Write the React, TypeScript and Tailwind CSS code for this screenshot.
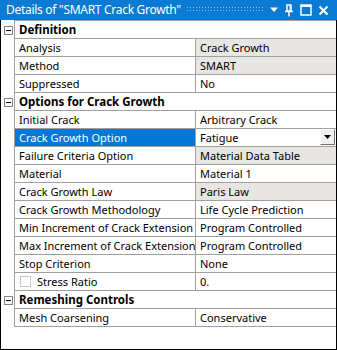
import React from "react";

type Row =
  | { kind: "header"; label: string }
  | {
      kind: "prop";
      name: string;
      value: string;
      grey?: boolean;
      selected?: boolean;
      dropdown?: boolean;
      checkbox?: boolean;
    };

const rows: Row[] = [
  { kind: "header", label: "Definition" },
  { kind: "prop", name: "Analysis", value: "Crack Growth", grey: true },
  { kind: "prop", name: "Method", value: "SMART", grey: true },
  { kind: "prop", name: "Suppressed", value: "No" },
  { kind: "header", label: "Options for Crack Growth" },
  { kind: "prop", name: "Initial Crack", value: "Arbitrary Crack" },
  { kind: "prop", name: "Crack Growth Option", value: "Fatigue", selected: true, dropdown: true },
  { kind: "prop", name: "Failure Criteria Option", value: "Material Data Table", grey: true },
  { kind: "prop", name: "Material", value: "Material 1" },
  { kind: "prop", name: "Crack Growth Law", value: "Paris Law", grey: true },
  { kind: "prop", name: "Crack Growth Methodology", value: "Life Cycle Prediction" },
  { kind: "prop", name: "Min Increment of Crack Extension", value: "Program Controlled" },
  { kind: "prop", name: "Max Increment of Crack Extension", value: "Program Controlled" },
  { kind: "prop", name: "Stop Criterion", value: "None" },
  { kind: "prop", name: "Stress Ratio", value: "0.", checkbox: true },
  { kind: "header", label: "Remeshing Controls" },
  { kind: "prop", name: "Mesh Coarsening", value: "Conservative" },
];

function Collapse() {
  return (
    <div className="w-[9px] h-[9px] border border-[#848484] bg-white flex items-center justify-center">
      <div className="w-[5px] h-px bg-black" />
    </div>
  );
}

export default function App() {
  return (
    <div
      className="w-[337px] h-[350px] bg-white flex flex-col text-[11px] text-black overflow-hidden"
      style={{ fontFamily: '"Noto Sans", "Open Sans", sans-serif' }}
    >
      {/* title bar */}
      <div className="h-[20px] bg-[#0a7ad2] flex items-center pl-[6px] pr-[8px] text-white shrink-0">
        <span className="text-[12px] leading-none whitespace-nowrap tracking-[-0.3px]">
          Details of "SMART Crack Growth"
        </span>
        <svg className="ml-[6px] flex-1 h-[6px]" preserveAspectRatio="none">
          <defs>
            <pattern id="dots" width="3" height="3" patternUnits="userSpaceOnUse">
              <rect x="0" y="0" width="1" height="1" fill="#8fc3ef" />
            </pattern>
          </defs>
          <rect x="0" y="0" width="100%" height="6" fill="url(#dots)" />
        </svg>
        <svg width="10" height="6" viewBox="0 0 10 6" className="ml-[4px]">
          <path d="M1 0.5 H9 L5 5 Z" fill="white" />
        </svg>
        <svg width="10" height="13" viewBox="0 0 10 13" className="ml-[5px]">
          <path d="M3 1 H7 V7 H3 Z" fill="none" stroke="white" strokeWidth="1.5" />
          <path d="M1 7.5 H9" stroke="white" strokeWidth="1.5" />
          <path d="M5 8 V12.5" stroke="white" strokeWidth="1.5" />
          <path d="M6 1.5 V7" stroke="white" strokeWidth="1" />
        </svg>
        <svg width="12" height="12" viewBox="0 0 12 12" className="ml-[6px]">
          <rect x="1" y="1" width="10" height="10" fill="none" stroke="white" strokeWidth="1.5" />
          <path d="M1 2 H11" stroke="white" strokeWidth="2" />
        </svg>
        <svg width="11" height="11" viewBox="0 0 11 11" className="ml-[6px]">
          <path d="M1.5 1.5 L9.5 9.5 M9.5 1.5 L1.5 9.5" stroke="white" strokeWidth="2" />
        </svg>
      </div>

      {/* body */}
      <div className="flex-1 border-l border-r border-b border-black flex flex-col">
        <div className="h-px bg-[#a0a0a0] ml-[13px] mr-0" />
        {rows.map((r, i) =>
          r.kind === "header" ? (
            <div key={i} className="flex h-[18px]">
              <div className="w-[13px] flex items-center justify-center pl-[1px]">
                <Collapse />
              </div>
              <div className="flex-1 border-l border-b border-[#a0a0a0] flex items-center pl-[4px] font-bold leading-none text-[11.5px]">
                {r.label}
              </div>
            </div>
          ) : (
            <div key={i} className="flex h-[18px]">
              <div className="w-[13px]" />
              <div
                className={
                  "w-[182px] border-l border-b border-r border-[#a0a0a0] flex items-center pl-[4px] leading-none whitespace-nowrap " +
                  (r.selected ? "bg-[#0078d7] text-white" : "")
                }
              >
                {r.checkbox && (
                  <div className="w-[11px] h-[11px] border border-[#c8c8c8] bg-white mr-[6px] ml-[1px]" />
                )}
                {r.name}
              </div>
              <div
                className={
                  "flex-1 border-b border-[#a0a0a0] flex items-center pl-[4px] leading-none whitespace-nowrap relative " +
                  (r.grey ? "bg-[#e8e6e3]" : "bg-white")
                }
              >
                {r.value}
                {r.dropdown && (
                  <div className="absolute right-[1px] top-0 bottom-[1px] w-[15px] bg-[#f0f0f0] border-t border-l border-white border-r-[#6e6e6e] border-b-[#6e6e6e] border-r border-b flex items-center justify-center">
                    <svg width="7" height="4" viewBox="0 0 7 4">
                      <path d="M0 0 H7 L3.5 4 Z" fill="black" />
                    </svg>
                  </div>
                )}
              </div>
            </div>
          )
        )}
      </div>
    </div>
  );
}
